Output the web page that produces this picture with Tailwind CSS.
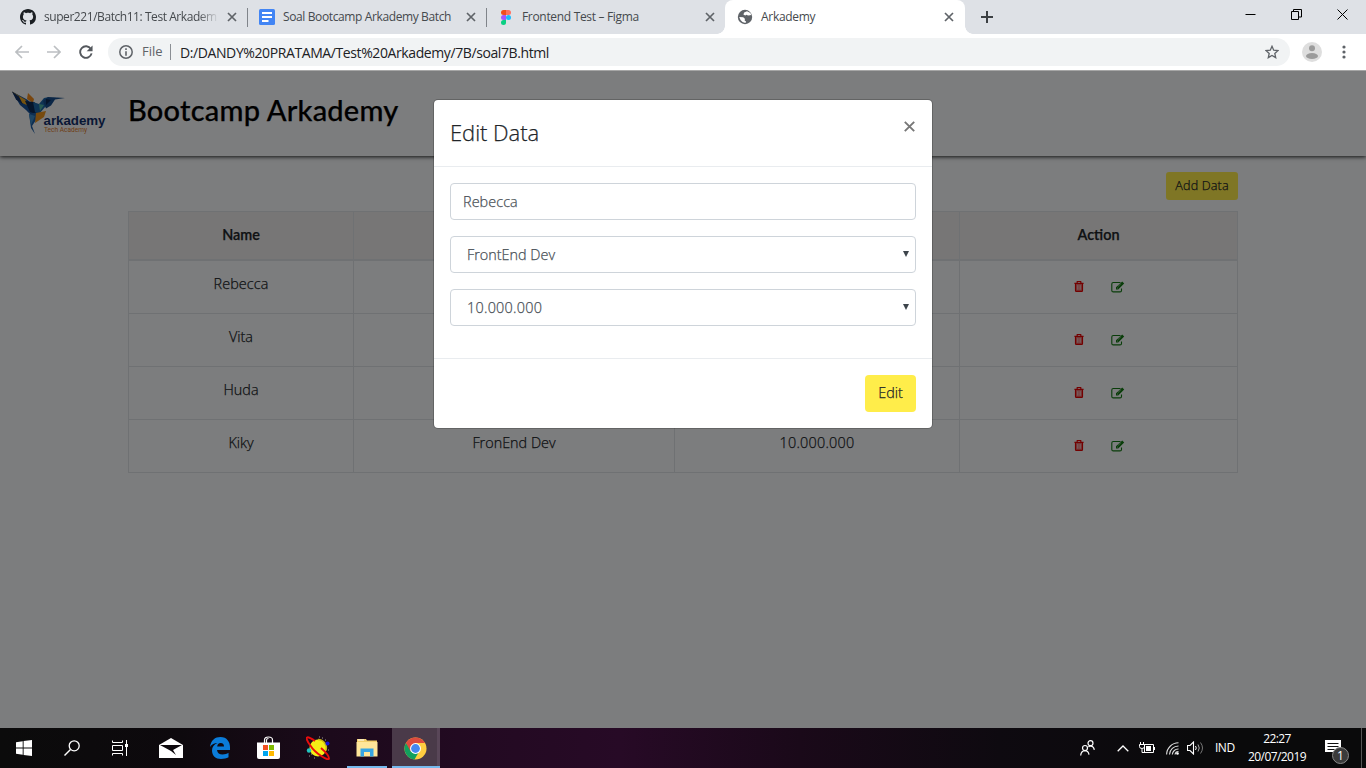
<!DOCTYPE html>
<html lang="id">
<head>
<meta charset="utf-8">
<title>Arkademy</title>
<script src="https://cdn.jsdelivr.net/npm/@tailwindcss/browser@4"></script>
</head>
<body>
<svg class="hidden">
  <symbol id="x" viewBox="0 0 10 10"><path d="M1 1l8 8M9 1L1 9" stroke="#5f6368" stroke-width="1.7" fill="none"/></symbol>
  <symbol id="trash" viewBox="0 0 10 12"><path d="M1.200 3h7.600v8.400H1.200z" fill="#e00000" fill-opacity=".55"/><path d="M3 2V1q0-.6.6-.6h2.800Q7 .4 7 1v1M0 2.500h10M1.200 3v7.400q0 1 1 1h5.600q1 0 1-1V3" stroke="#e60000" stroke-width="1.300" fill="none"/><path d="M3.400 4.500v5M5 4.500v5M6.600 4.500v5" stroke="#f3dcdc" stroke-width=".7"/></symbol>
  <symbol id="pen" viewBox="0 0 14 12"><path d="M9.500 1.500H2.300Q.8 1.500.8 3v6.400q0 1.500 1.500 1.500H9q1.500 0 1.500-1.500V7.500" stroke="#127a12" stroke-width="1.100" fill="none"/><path d="M5 6.300L11.200.4l2 2L7.200 8.400H5z" fill="#127a12"/><path d="M6 6.600l1.100 1M9.900 2.700L7 5.500" stroke="#ddd" stroke-width=".6"/></symbol>
</svg>
<div class="w-[1366px] h-[768px] flex flex-col overflow-hidden relative font-['Open_Sans',sans-serif]">

  <!-- Tab strip -->
  <div class="h-[34px] bg-[#dee1e6] flex shrink-0 text-[12px] tracking-[-0.440px] text-[#45494d] leading-[34px]">
    <div class="w-[247px] flex items-center pl-5">
      <svg class="size-4 shrink-0" viewBox="0 0 16 16"><path fill="#1b1f23" d="M8 0C3.58 0 0 3.58 0 8c0 3.54 2.29 6.53 5.47 7.59.4.07.55-.17.55-.38 0-.19-.01-.82-.01-1.49-2.01.37-2.53-.49-2.69-.94-.09-.23-.48-.94-.82-1.13-.28-.15-.68-.52-.01-.53.63-.01 1.08.58 1.23.82.72 1.21 1.87.87 2.33.66.07-.52.28-.87.51-1.07-1.78-.2-3.64-.89-3.64-3.95 0-.87.31-1.59.82-2.15-.08-.2-.36-1.02.08-2.12 0 0 .67-.21 2.2.82.64-.18 1.32-.27 2-.27s1.36.09 2 .27c1.53-1.04 2.2-.82 2.2-.82.44 1.1.16 1.92.08 2.12.51.56.82 1.27.82 2.15 0 3.07-1.87 3.75-3.65 3.95.29.25.54.73.54 1.48 0 1.07-.01 1.93-.01 2.2 0 .21.15.46.55.38A8.01 8.01 0 0 0 16 8c0-4.42-3.58-8-8-8z"/></svg>
      <span class="ml-2 w-[175px] overflow-hidden whitespace-nowrap mask-[linear-gradient(90deg,#000_88%,transparent)]">super221/Batch11: Test Arkadem</span>
      <svg class="size-[10px] ml-2"><use href="#x"/></svg>
    </div>
    <div class="w-[239px] flex items-center pl-3 relative">
      <i class="absolute left-0 top-2 w-px h-[19px] bg-[#80848a]"></i>
      <svg class="size-4 shrink-0" viewBox="0 0 16 16"><rect width="16" height="16" rx="1.500" fill="#4285f4"/><path d="M3 4h10M3 8h10M3 12h6.500" stroke="#fff" stroke-width="2"/></svg>
      <span class="ml-2 w-[174px] overflow-hidden whitespace-nowrap tracking-[-0.380px]">Soal Bootcamp Arkademy Batch</span>
      <svg class="size-[10px] ml-[9px]"><use href="#x"/></svg>
    </div>
    <div class="w-[239px] flex items-center pl-[15px] relative">
      <i class="absolute left-0 top-2 w-px h-[19px] bg-[#80848a]"></i>
      <svg class="w-[10px] h-[15px]" viewBox="0 0 10 15"><path d="M5 0H2.500a2.500 2.500 0 000 5H5z" fill="#f24e1e"/><path d="M5 0h2.500a2.500 2.500 0 010 5H5z" fill="#ff7262"/><path d="M5 5H2.500a2.500 2.500 0 000 5H5z" fill="#a259ff"/><circle cx="7.500" cy="7.500" r="2.500" fill="#1abcfe"/><path d="M5 10H2.500A2.500 2.500 0 105 12.500z" fill="#0acf83"/></svg>
      <span class="ml-[11px] w-[182px] whitespace-nowrap tracking-[-0.320px]">Frontend Test – Figma</span>
      <svg class="size-[10px] ml-px"><use href="#x"/></svg>
    </div>
    <div class="w-[240px] flex items-center pl-3 bg-white rounded-t-lg relative">
      <i class="absolute -left-2 bottom-0 size-2 bg-[radial-gradient(circle_at_0_0,#dee1e6_7.5px,#fff_8px)]"></i>
      <i class="absolute -right-2 bottom-0 size-2 bg-[radial-gradient(circle_at_100%_0,#dee1e6_7.5px,#fff_8px)]"></i>
      <svg class="size-4" viewBox="0 0 16 16"><circle cx="8" cy="8" r="7.200" fill="#5f6368"/><path d="M10 2.200L7.200 3.500 6.400 5.600l1.800.8 1.300-.6 1.500.7 2.200-.2 1-.6-.8-1.800zM2.200 8l4 .3 1.700 1.400-.2 2 1.300.6-.5 1.600-3-.8-2-2z" fill="#fff"/></svg>
      <span class="ml-2 w-[182px] tracking-[-0.300px]">Arkademy</span>
      <svg class="size-[10px] ml-px"><use href="#x"/></svg>
    </div>
    <div class="grow flex items-center pl-4">
      <svg class="size-3" viewBox="0 0 12 12"><path d="M6 0v12M0 6h12" stroke="#3c4043" stroke-width="2"/></svg>
      <div class="grow"></div>
      <div class="flex items-center gap-[35px] pr-[18px] -mt-1.5">
        <svg class="size-[11px]" viewBox="0 0 11 11"><path d="M.5 5.500h10" stroke="#000"/></svg>
        <svg class="size-[11px]" viewBox="0 0 11 11"><path d="M.5 2.500h7v8h-7zM2.500 2.500V.5h8v7.500h-3" stroke="#000" fill="none"/></svg>
        <svg class="size-[11px]" viewBox="0 0 11 11"><path d="M.5.5l10 10M10.500.5l-10 10" stroke="#000"/></svg>
      </div>
    </div>
  </div>

  <!-- Address bar -->
  <div class="h-[37px] bg-white border-b border-[#a6a6a6] flex shrink-0 items-center pl-[15px]">
    <svg class="w-[14px] h-[14px] mb-px" viewBox="0 0 14 14"><path d="M14 7H1.500M7 1L1 7l6 6" fill="none" stroke="#bcbfc2" stroke-width="1.700"/></svg>
    <svg class="w-[14px] h-[14px] mb-px ml-[18px]" viewBox="0 0 14 14"><path d="M0 7h12.500M7 1l6 6-6 6" fill="none" stroke="#bcbfc2" stroke-width="1.700"/></svg>
    <svg class="size-[14px] ml-[18px] mb-px" viewBox="0 0 15 15"><path d="M12.700 4.200A6.200 6.200 0 1013.500 9" fill="none" stroke="#54585d" stroke-width="2"/><path d="M14.500.5v6.300H8.200z" fill="#54585d"/></svg>
    <div class="ml-[15px] w-[1182px] h-7 rounded-full bg-[#f1f3f4] flex items-center pl-[11px] pr-[11px]">
      <svg class="size-[14px]" viewBox="0 0 14 14"><circle cx="7" cy="7" r="6.200" stroke="#5f6368" stroke-width="1.500" fill="none"/><path d="M7 6.200v4.500M7 3.300V5" stroke="#5f6368" stroke-width="1.600"/></svg>
      <span class="ml-[9px] w-[21px] text-[13px] text-[#5f6368] whitespace-nowrap">File</span>
      <i class="ml-[7px] w-px h-4 bg-[#8b8f94]"></i>
      <span class="ml-[9px] grow text-[14px] tracking-[-0.400px] text-[#202124]">D:/DANDY%20PRATAMA/Test%20Arkademy/7B/soal7B.html</span>
      <svg class="size-[14px]" viewBox="0 0 14 14"><path d="M7 1.300l1.700 3.900 4.300.4-3.200 2.800.9 4.200L7 10.400l-3.700 2.200.9-4.200L1 5.600l4.300-.4z" stroke="#5f6368" stroke-width="1.300" fill="none"/></svg>
    </div>
    <svg class="size-5 ml-3" viewBox="0 0 20 20"><circle cx="10" cy="10" r="10" fill="#dedede"/><circle cx="10" cy="6.300" r="3" fill="#9b9b9b"/><ellipse cx="10" cy="14" rx="6" ry="3" fill="#9b9b9b"/></svg>
    <svg class="w-1 h-[14px] ml-[20px]" viewBox="0 0 4 14"><g fill="#5f6368"><circle cx="2" cy="2" r="1.600"/><circle cx="2" cy="7" r="1.600"/><circle cx="2" cy="12" r="1.600"/></g></svg>
  </div>

  <!-- Page -->
  <div class="grow relative bg-[#f8fafc] font-light text-[14.400px] text-[#212529] [-webkit-text-stroke:0.25px] overflow-hidden">
    <header class="h-[85px] bg-[#f8fafc] shadow-[0_1px_4px_0_rgba(0,0,0,.85)] flex">
      <div class="w-[120px] bg-[#f8f8f8] [-webkit-text-stroke:0]">
        <svg class="w-[120px] h-[85px]" viewBox="0 0 120 85">
          <path d="M12 20.500l16 8.500 9 12-4 5-7-7-6-5z" fill="#17529a"/>
          <path d="M12 20.500l13 8 5 7-9-4z" fill="#e9a520"/>
          <path d="M12 20.500l4 8 7 5-4-8z" fill="#123062"/>
          <path d="M28 22l6 6-1 4-6-4z" fill="#f28c1e"/>
          <path d="M25 30l9 1 6 5-4 7-6-2z" fill="#0c2a55"/>
          <path d="M33 31l6 2 5-6 5-1-3 9-7 8-4-2z" fill="#1f68a8"/>
          <path d="M43 30l5-4 5 .3 12 .7-10 1.500-4 6-5 3z" fill="#164d8c"/>
          <path d="M46 28l5 1-5 5z" fill="#0c2a55"/>
          <path d="M39 33l5 1-4 6z" fill="#4fb5a3"/>
          <path d="M29 43l10-2-3 8-4 6 3 8-4-6z" fill="#1c5fa6"/>
          <path d="M29 43l6 2-4 9z" fill="#3d8cc9"/>
          <path d="M36 42l10-2-2 6-9 6z" fill="#ee941c"/>
          <text x="43.500" y="54" font-family="Liberation Sans" font-weight="700" font-size="12.500" fill="#12316b" textLength="62" lengthAdjust="spacingAndGlyphs">arkademy</text>
          <text x="44" y="61" font-family="Roboto" font-weight="400" font-size="7" fill="#e07d2a" textLength="43" lengthAdjust="spacingAndGlyphs">Tech Academy</text>
        </svg>
      </div>
      <h1 class="ml-2 mt-[20px] font-['Lato',sans-serif] font-medium text-[29px] leading-[38px] tracking-[0.220px] text-black whitespace-nowrap">Bootcamp Arkademy</h1>
    </header>

    <main class="w-[1110px] ml-32 pt-4">
      <div class="flex justify-end"><button class="w-[72px] h-7 rounded-[3px] bg-[#ffed4a] text-[12.600px] tracking-[0.140px]">Add Data</button></div>
      <div class="mt-[11px] grid grid-cols-[225px_321px_285px_278px] border-l border-t border-[#dee2e6] text-center *:border-[#dee2e6] *:border-r *:border-b">
        <div class="h-[49px] border-b-2! bg-[#eeedec] leading-[46px] font-['Lato',sans-serif] font-semibold">Name</div>
        <div class="border-b-2! bg-[#eeedec] leading-[46px] font-['Lato',sans-serif] font-semibold">Work</div>
        <div class="border-b-2! bg-[#eeedec] leading-[46px] font-['Lato',sans-serif] font-semibold">Salary</div>
        <div class="border-b-2! bg-[#eeedec] leading-[46px] font-['Lato',sans-serif] font-semibold">Action</div>

        <div class="h-[53px] leading-[46px] tracking-[0.080px]">Rebecca</div><div></div><div></div>
        <div class="flex justify-center gap-[27px] pt-[20px] pl-px"><svg class="w-[10px] h-[11px]"><use href="#trash"/></svg><svg class="w-[14px] h-[12px]"><use href="#pen"/></svg></div>

        <div class="h-[53px] leading-[46px]">Vita</div><div></div><div></div>
        <div class="flex justify-center gap-[27px] pt-[20px] pl-px"><svg class="w-[10px] h-[11px]"><use href="#trash"/></svg><svg class="w-[14px] h-[12px]"><use href="#pen"/></svg></div>

        <div class="h-[53px] leading-[46px]">Huda</div><div></div><div></div>
        <div class="flex justify-center gap-[27px] pt-[20px] pl-px"><svg class="w-[10px] h-[11px]"><use href="#trash"/></svg><svg class="w-[14px] h-[12px]"><use href="#pen"/></svg></div>

        <div class="h-[53px] leading-[46px]">Kiky</div>
        <div class="leading-[46px]">FronEnd Dev</div>
        <div class="leading-[46px] tracking-[0.240px]">10.000.000</div>
        <div class="flex justify-center gap-[27px] pt-[20px] pl-px"><svg class="w-[10px] h-[11px]"><use href="#trash"/></svg><svg class="w-[14px] h-[12px]"><use href="#pen"/></svg></div>
      </div>
    </main>

    <!-- Backdrop and modal -->
    <div class="absolute inset-0 bg-black/50 flex justify-center items-start pt-[28px]">
      <div class="w-[500px] h-[330px] bg-white bg-clip-padding border border-black/20 rounded-[5px] flex flex-col">
        <div class="h-[67px] border-b border-[#e9ecef] px-4 flex justify-between shrink-0">
          <h2 class="text-[22px] leading-[64px] tracking-[-0.050px]">Edit Data</h2>
          <svg class="w-[11px] h-[11px] mt-[21px] mr-[1px]" viewBox="0 0 11 11"><path d="M.8.8l9.400 9.400M10.200.8L.8 10.200" stroke="#777" stroke-width="1.900"/></svg>
        </div>
        <div class="grow p-4 flex flex-col gap-4 text-[#495057]">
          <div class="h-[37px] shrink-0 border border-[#ced4da] rounded px-3 leading-[35px] tracking-[0.080px]">Rebecca</div>
          <div class="h-[37px] shrink-0 border border-[#ced4da] rounded pl-4 pr-[6px] leading-[35px] flex justify-between items-center"><span>FrontEnd Dev</span><svg class="w-[6px] h-[6px] mb-0.5" viewBox="0 0 6 6"><path d="M0 0h6L3 6z" fill="#3d444b"/></svg></div>
          <div class="h-[37px] shrink-0 border border-[#ced4da] rounded pl-4 pr-[6px] leading-[35px] flex justify-between items-center"><span class="tracking-[0.260px]">10.000.000</span><svg class="w-[6px] h-[6px] mb-0.5" viewBox="0 0 6 6"><path d="M0 0h6L3 6z" fill="#3d444b"/></svg></div>
        </div>
        <div class="h-[70px] shrink-0 border-t border-[#e9ecef] px-4 pt-4 flex justify-end"><button class="w-[51px] h-[37px] rounded bg-[#ffed4a] leading-[35px] pb-0.5">Edit</button></div>
      </div>
    </div>
  </div>

  <!-- Taskbar -->
  <div class="h-10 shrink-0 bg-[linear-gradient(90deg,#0b0b0b_0,#0d090d_180px,#1c0a1b_330px,#230a22_480px,#270a26_620px,#1a0919_800px,#0e0a10_1000px,#0a0a0b_1200px)] flex items-center text-white">
    <div class="w-12 flex justify-center"><svg class="size-4" viewBox="0 0 16 16"><path d="M0 2.300L6.700 1.300V7.600H0zM7.600 1.100L16 0v7.600H7.600zM0 8.500h6.700v6.300L0 13.800zM7.600 8.500H16V16l-8.400-1.100z" fill="#fff"/></svg></div>
    <div class="w-12 flex justify-center"><svg class="size-4" viewBox="0 0 16 16"><circle cx="10.200" cy="5.800" r="5" fill="none" stroke="#fff" stroke-width="1.300"/><path d="M6.500 9.500L.5 15.500" stroke="#fff" stroke-width="1.400"/></svg></div>
    <div class="w-12 flex justify-center"><svg class="w-4 h-4" viewBox="0 0 16 16"><path d="M.5.5v2h10v-2M.5 15.500v-2h10v2M.5 5.500h10v5H.5zM14.500 0v16" fill="none" stroke="#fff"/><path d="M13 4h3v3h-3z" fill="#fff"/></svg></div>
    <div class="w-[54px] flex justify-center"><svg class="w-6 h-5" viewBox="0 0 24 20"><path d="M0 7L12 0l12 7v13H0z" fill="#fff"/><path d="M1 7h22l-9 5 3 5-5-4z" fill="#0d090d"/></svg></div>
    <div class="w-[44px] flex justify-center"><svg class="w-5 h-[22px]" viewBox="0 0 20 22"><path d="M0 10C1 3 5 0 10.500 0 17 0 20 5 20 10v3H7c.3 3 2.500 4.500 5.500 4.500 2.500 0 4.500-.7 6-1.700v4.500C16.500 21.500 14 22 11 22 5.500 22 2 18.500 2 13.500 2 10 4 7.500 7.500 6 4.500 6 1.500 7.500 0 10zM7.200 9.500H14C14 7.500 13 6 10.700 6S7.500 7.500 7.200 9.500z" fill="#0b7cd9"/></svg></div>
    <div class="w-[52px] flex justify-center"><svg class="w-[23px] h-6 ml-px" viewBox="0 0 23 24"><path d="M7.500 7V4q0-3 4-3t4 3v3M9.500 7V4q0-1.500 2-1.500" fill="none" stroke="#fff" stroke-width="1.200"/><path d="M0 6.500h23V21q0 2-2 2H2q-2 0-2-2z" fill="#fff"/><path d="M6 9h5v5H6z" fill="#f25022"/><path d="M12 9h5v5h-5z" fill="#7fba00"/><path d="M6 15h5v5H6z" fill="#00a4ef"/><path d="M12 15h5v5h-5z" fill="#ffb900"/></svg></div>
    <div class="w-[47px] flex justify-center"><svg class="size-6" viewBox="0 0 24 24"><circle cx="12" cy="12" r="8.500" fill="#f4ee16"/><path d="M12 3.500a8.500 8.500 0 018 11" fill="none" stroke="#c7b813" stroke-width="1.500"/><path d="M4 9C1 5 0 2 1 1.500 2 .7 6 2.500 9 5M4 9c3 5 8 9 12 11.500 4 2.500 7 3.500 7 2 0-2-4-7-8-10.500" fill="none" stroke="#e80d0d" stroke-width="1.900"/><circle cx="21.500" cy="7.500" r="2" fill="#1414d8"/><circle cx="3" cy="14.500" r="2.200" fill="#22c6c0"/><path d="M16 2h1M19 4h1M3 20h1M8 22h1M5 18h1M22 14h1M13 1h1" stroke="#999"/></svg></div>
    <div class="w-[52px] h-10 flex flex-col items-center"><svg class="w-[22px] h-[20px] mt-[10px]" viewBox="0 0 22 20"><path d="M1 1h9l1 1.500h10V18H1z" fill="#f3cf6b"/><path d="M.5 4h21v14.500H.5z" fill="#ffe69a"/><path d="M2 2h6" stroke="#fff"/><path d="M4.500 18.500v-8h13v8h-3.500v-4.500h-6v4.500z" fill="#37a5e2"/></svg><i class="w-10 h-0.5 bg-[#76b9ed] mt-auto"></i></div>
    <div class="w-[48px] -ml-px h-10 bg-[#4a3a49] flex flex-col items-center relative border-r-[3px] border-[#594658]">
      <svg class="size-[23px] mt-[9px] ml-[1px]" viewBox="0 0 24 24"><circle cx="12" cy="12" r="11.500" fill="#ffcd40"/><path d="M12 12L2 6.250A11.500 11.500 0 0011 23.450l4-7z" fill="#12a05e"/><path d="M2 6.250A11.500 11.500 0 0122 6.300H12L7 15z" fill="#dd4b3e"/><circle cx="12" cy="12" r="5.700" fill="#fff"/><circle cx="12" cy="12" r="4.600" fill="#4688f1"/></svg>
      <i class="absolute left-0 -right-[3px] bottom-0 h-0.5 bg-[#76b9ed]"></i>
    </div>
    <div class="grow"></div>
    <svg class="w-[15px] h-4" viewBox="0 0 15 16"><g fill="none" stroke="#fff" stroke-width="1.200"><circle cx="5" cy="8" r="2.500"/><path d="M.7 15.500q.3-4.500 4.300-4.800 3.500.3 4 4"/><circle cx="10.500" cy="3.200" r="2.500"/><path d="M8.500 7q1-1.200 2-1.200 3.300.5 3.800 4"/></g></svg>
    <svg class="w-3 h-[7px] ml-[22px]" viewBox="0 0 12 7"><path d="M.7 6.300L6 1l5.300 5.300" stroke="#fff" stroke-width="1.300" fill="none"/></svg>
    <svg class="w-4 h-[12px] ml-[10px]" viewBox="0 0 16 12"><path d="M5.500 2.500h9v8h-9zM1.500 0v2.500M4.500 0v2.500M.5 2.500h5v2q0 2-2.500 2t-2.500-2zM3 6.500v4h3" fill="none" stroke="#fff"/><path d="M7 4h5v5H7zM15 5h1v3h-1z" fill="#fff"/></svg>
    <svg class="size-[13px] ml-[11px]" viewBox="0 0 13 13"><g fill="none" stroke="#ddd" stroke-width="1.100"><path d="M.6 12.500A12 12 0 0112.500.8M3.500 12.500a9 9 0 019-8.500M6.300 12.500a6 6 0 016.200-5.500M9 12.500a3.500 3.500 0 013.500-3"/></g><circle cx="11.500" cy="11.500" r="1.300" fill="#fff"/></svg>
    <svg class="w-[17px] h-[14px] ml-[8px]" viewBox="0 0 17 14"><path d="M.5 4.500h2.500l3.500-3.500v12L3 9.500H.5z" fill="none" stroke="#fff" stroke-width="1.100"/><path d="M8.500 5q1.500 2 0 4" stroke="#fff" fill="none"/><path d="M11 3.500q2.500 3.500 0 7" stroke="#aaa" fill="none"/><path d="M13.500 1.500q4 5.500 0 11" stroke="#777" fill="none"/></svg>
    <span class="ml-[11px] w-5 text-[12px] tracking-[-0.500px] whitespace-nowrap">IND</span>
    <div class="ml-[11px] mr-px w-[62px] text-center text-[12px] leading-[18px] tracking-[-0.570px]">22:27<br>20/07/2019</div>
    <div class="ml-[16px] w-[36px] h-10 relative">
      <svg class="absolute left-0 top-[12px] w-4 h-[15px]" viewBox="0 0 16 15"><path d="M0 0h16v12h-5l-3 3v-3H0z" fill="#fff"/><path d="M2.500 3.500h11M2.500 6.500h11M2.500 9.500h7" stroke="#111"/></svg>
      <span class="absolute left-[7px] top-[19px] size-[17px] rounded-full bg-[#3b3b3b] border border-[#8a8a8a] text-[12px] leading-[15px] text-center">1</span>
    </div>
    <i class="w-px h-10 bg-[#555] mr-[4px]"></i>
  </div>
</div>
</body>
</html>
